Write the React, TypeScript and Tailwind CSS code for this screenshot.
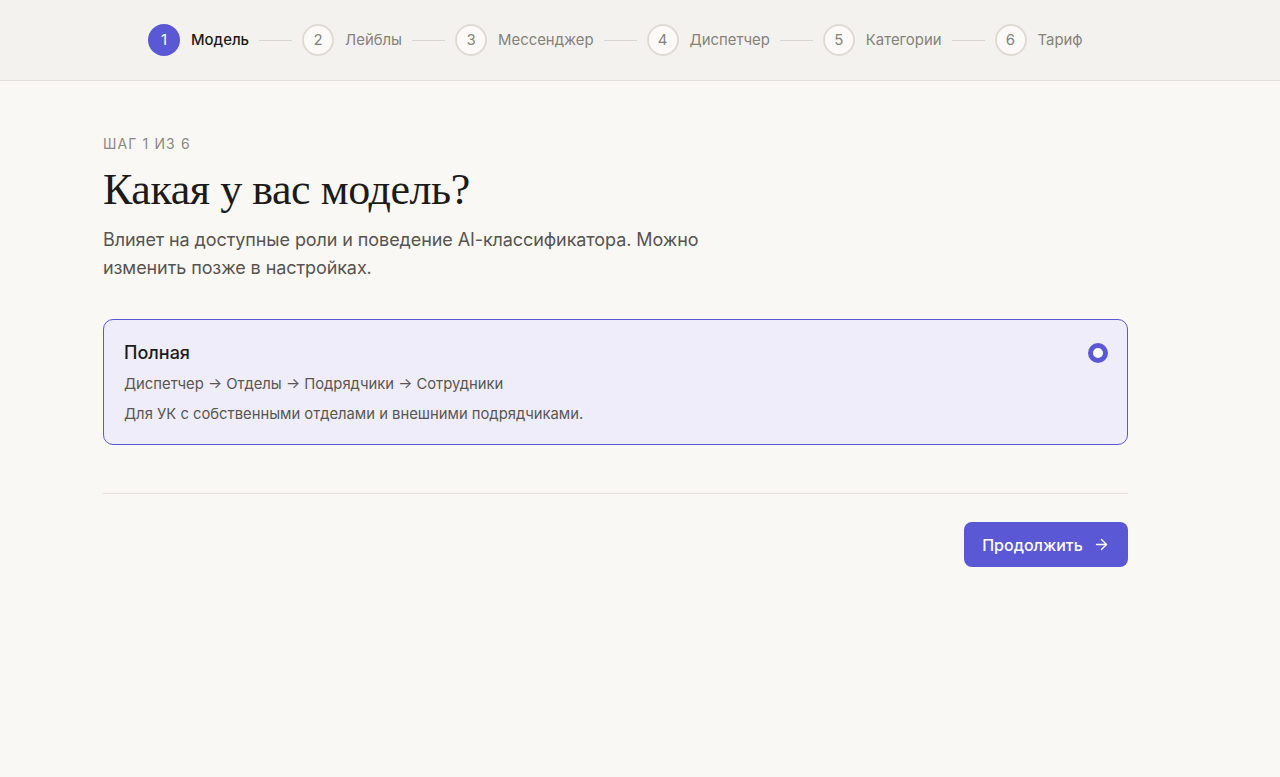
import { ArrowRight } from 'lucide-react';

const steps = ['Модель', 'Лейблы', 'Мессенджер', 'Диспетчер', 'Категории', 'Тариф'];

function Stepper() {
    return (
        <div className="h-[81px] bg-[#f3f2ee] border-b border-[#e4e1db] flex items-center pl-[148px]">
            {steps.map((s, i) => (
                <div key={s} className="flex items-center">
                    {i > 0 && <div className="w-[33px] h-px bg-[#d8d5cf] mx-[10px]"></div>}
                    {i === 0 ? (
                        <div className="w-8 h-8 rounded-full bg-[#5b58d6] text-white flex items-center justify-center text-[15px]">1</div>
                    ) : (
                        <div className="w-8 h-8 rounded-full border-2 border-[#dedbd5] bg-[#fbfaf8] text-[#87837c] flex items-center justify-center text-[15px]">{i + 1}</div>
                    )}
                    <span className={`ml-[11px] text-[14.9px] ${i === 0 ? 'text-[#1d1c1a] font-medium' : 'text-[#86827b]'}`}>{s}</span>
                </div>
            ))}
        </div>
    )
}

export default function App() {
    return (
        <div className="min-h-[777px] bg-[#f9f8f5]" style={{ fontFamily: 'Inter, "Noto Sans", sans-serif' }}>
            <Stepper />
            <div className="pl-[103px] pt-[54px] w-[1128px]">
                <p className="text-[14px] tracking-[0.08em] text-[#8b8882] uppercase leading-[18px]">Шаг 1 из 6</p>
                <h1 className="mt-[11px] text-[44px] leading-[52px] text-[#1c1b19] tracking-[-0.01em]" style={{ fontFamily: '"Liberation Serif", "DejaVu Serif", serif' }}>Какая у вас модель?</h1>
                <p className="mt-[10px] text-[18px] leading-[28px] text-[#57544f] max-w-[620px] tracking-[-0.005em]">Влияет на доступные роли и поведение AI-классификатора. Можно изменить позже в настройках.</p>

                <div className="mt-[37px] border border-[#5b58d6] bg-[#eeedf9] rounded-[10px] pl-[20px] pr-[19px] pt-[22px] pb-[20px] flex items-start justify-between">
                    <div>
                        <h3 className="text-[18px] leading-[22px] font-medium text-[#1d1c1a]">Полная</h3>
                        <p className="mt-[10px] text-[14.8px] leading-[20px] text-[#5a5751]">Диспетчер → Отделы → Подрядчики → Сотрудники</p>
                        <p className="mt-[10px] text-[14.8px] leading-[20px] text-[#5a5751]">Для УК с собственными отделами и внешними подрядчиками.</p>
                    </div>
                    <div className="w-5 h-5 rounded-full border-[5px] border-[#5b58d6] bg-white mt-px"></div>
                </div>

                <div className="mt-[48px] h-px bg-[#e4e1db]"></div>

                <div className="mt-[28px] flex justify-end">
                    <button className="h-[45px] w-[164px] rounded-[8px] bg-[#5b58d6] text-white text-[16px] font-medium flex items-center justify-center gap-[10px]">
                        Продолжить
                        <ArrowRight size={17} strokeWidth={2} />
                    </button>
                </div>
            </div>
        </div>
    )
}
